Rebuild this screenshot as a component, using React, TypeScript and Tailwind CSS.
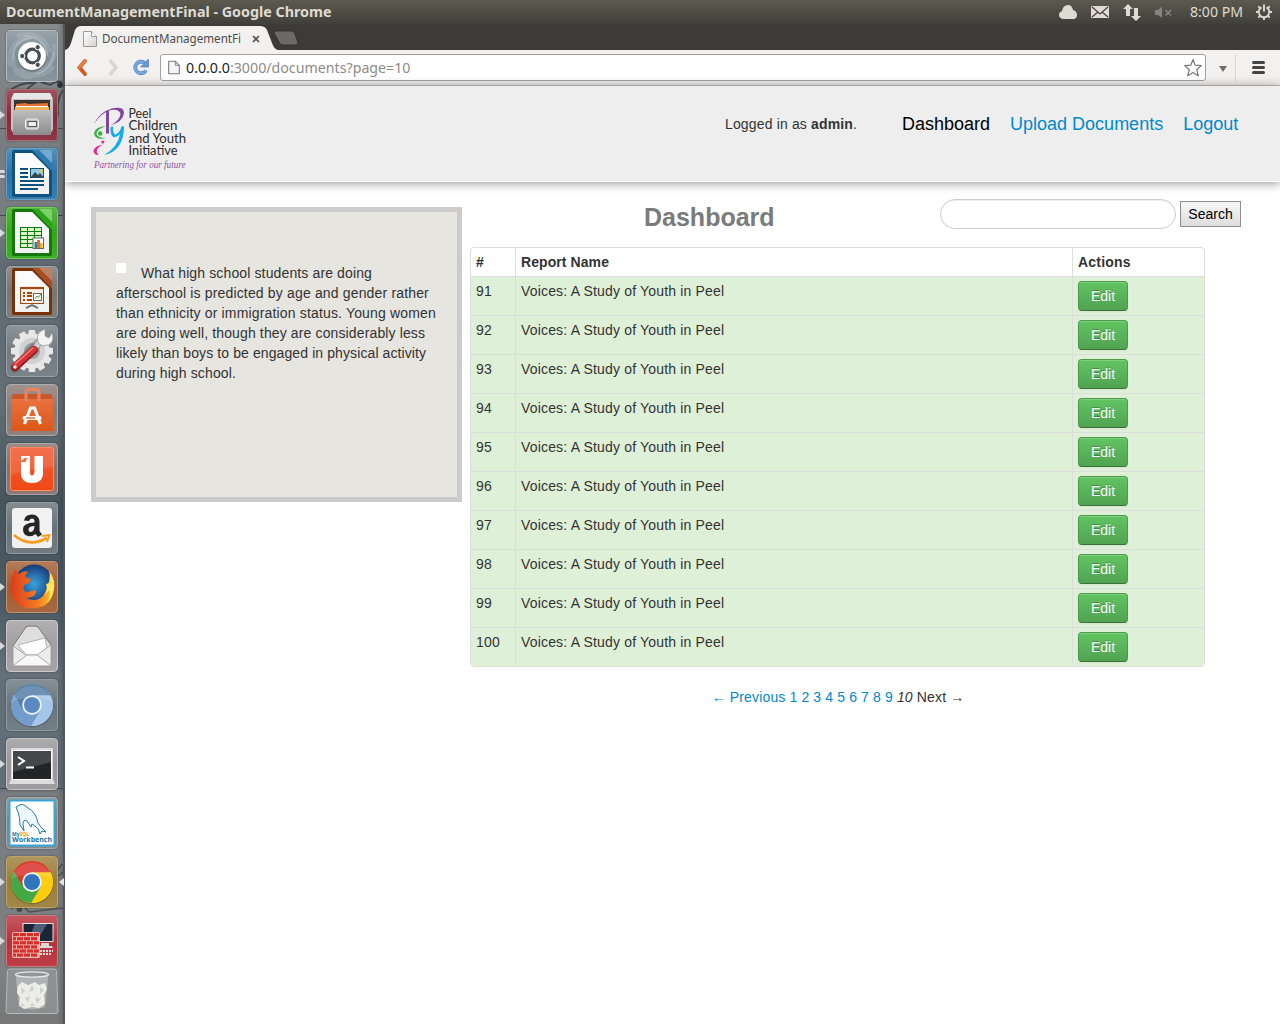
import React from "react";

type LauncherItem = { name: string; tile: string; icon: React.ReactNode; left?: 1 | 2; right?: boolean };

const OfficePage = ({ dark, mid, fold, children }: { dark: string; mid: string; fold: string; children: React.ReactNode }) => (
  <>
    <path d="M8 2H27L46 21V47Q46 49 44 49H8Q6 49 6 47V4Q6 2 8 2Z" fill={dark} />
    <path d="M28 2H44Q46 2 46 4V20Z" fill={fold} opacity=".75" />
    <path d="M26 2H33L46 15V23Z" fill={mid} />
    <path d="M9 5H26L43 22V46H9Z" fill="#f0f1f1" />
    <path d="M9 5H26L43 22V28L9 40Z" fill="#fff" opacity=".7" />
    {children}
  </>
);

const ChromeDisc = ({ top, left, right, core }: { top: string; left: string; right: string; core: string }) => (
  <>
    <circle cx="26" cy="27" r="21.5" fill="#0003" />
    <circle cx="26" cy="26" r="21" fill={right} />
    <path d="M26 26L16.5 31.5L7.8 15.5A21 21 0 0 1 44.6 16.4H26Z" fill={top} />
    <path d="M7.8 15.5L17 31L26 36L35 31L25.2 47A21 21 0 0 1 7.8 15.5Z" fill={left} />
    <path d="M26 16.4H44.6A21 21 0 0 1 25.2 47L35 31Z" fill={right} />
    <circle cx="26" cy="26" r="9.8" fill="#eef2f5" />
    <circle cx="26" cy="26" r="8" fill={core} />
    <path d="M5.5 23A21 21 0 0 1 46.5 23Q26 14 5.5 23Z" fill="#fff" opacity=".14" />
  </>
);

const launcher: LauncherItem[] = [
  {
    name: "Dash",
    tile: "bg-[#7f8d95] border-[#b3bdc3]",
    icon: (
      <>
        <g fill="none" stroke="#dfe6e9" strokeLinecap="round">
          <path d="M4 34Q2 12 24 7M13 6Q34 0 43 20M48 16Q50 34 34 42M46 38Q32 50 14 41M24 47Q6 46 7 26" strokeWidth="5" opacity=".18" />
          <path d="M7 30Q7 10 24 8M18 6Q38 6 42 26M48 22Q46 40 30 44" strokeWidth="1.2" opacity=".4" />
        </g>
        <circle cx="26" cy="27" r="14.5" fill="#0003" />
        <circle cx="26" cy="26" r="14" fill="#fff" />
        <circle cx="26.5" cy="26" r="6.8" fill="none" stroke="#454e52" strokeWidth="3.2" />
        <g fill="#454e52" stroke="#fff" strokeWidth="1"><circle cx="16.2" cy="26" r="2.6" /><circle cx="31.7" cy="17.2" r="2.6" /><circle cx="31.7" cy="34.8" r="2.6" /></g>
      </>
    ),
  },
  {
    name: "Files",
    left: 1,
    tile: "bg-[#87293a] border-[#b06a75]",
    icon: (
      <>
        <path d="M8 4H44L47 11V40L44 46H8L5 40V11Z" fill="#c4c4c4" />
        <path d="M8 4H44L47 10H5Z" fill="#e6e6e6" />
        <path d="M8 11H44V23H8Z" fill="#3a3330" />
        <path d="M10 15L20 14L22 15L42 14V23H9Z" fill="#e3702e" />
        <path d="M9 18H43V23H9Z" fill="#f5b25e" /><path d="M10 17.5H42" stroke="#fff" />
        <path d="M7 21H45V46H7Z" fill="url(#steel)" />
        <rect x="19.5" y="30" width="13" height="10" rx="2" fill="#c2c2c2" stroke="#eee" />
        <rect x="22" y="32.5" width="8.5" height="5" fill="#eee" stroke="#555" />
      </>
    ),
  },
  {
    name: "Writer",
    left: 2,
    tile: "bg-[#2b74a8] border-[#659fc5]",
    icon: (
      <OfficePage dark="#10527f" mid="#2c7bb0" fold="#82b4d5">
        <path d="M14 21H22M14 25H22M14 29H22M14 33H38M14 37H38M14 41H32" stroke="#0b517c" strokeWidth="1.8" />
        <rect x="24.5" y="20.5" width="13" height="9" fill="#8ccbec" stroke="#174d70" />
        <path d="M25 29L29 24L32 27L34 25L37 29Z" fill="#36454a" /><circle cx="35" cy="23" r="1.8" fill="#f3c441" />
      </OfficePage>
    ),
  },
  {
    name: "Calc",
    left: 1,
    tile: "bg-[#35a51e] border-[#6bd154]",
    icon: (
      <OfficePage dark="#127908" mid="#2da31b" fold="#8cdb76">
        <rect x="14" y="20" width="22" height="21" fill="#087c0b" />
        <g fill="#dbf8cb">{[21, 25, 29, 33, 37].map((y) => [15, 22, 29].map((x) => <rect key={`${x}-${y}`} x={x} y={y} width="6" height="3" />))}</g>
        <rect x="27" y="31" width="10.5" height="10.5" fill="#fff" stroke="#666" />
        <path d="M28.5 35H31V41H28.5Z" fill="#357ba8" /><path d="M31 33H34V41H31Z" fill="#e96e22" /><path d="M34 36H36.5V41H34Z" fill="#e7b32d" />
      </OfficePage>
    ),
  },
  {
    name: "Impress",
    tile: "bg-[#78746f] border-[#9fa4a6]",
    icon: (
      <OfficePage dark="#783109" mid="#a84c21" fold="#c98058">
        <rect x="14.5" y="21.5" width="23" height="16" fill="#fff0e5" stroke="#a24817" />
        <path d="M14 22H38" stroke="#a24817" strokeWidth="2.2" />
        <path d="M17 27H19M17 30H19M17 34H19M21 27H26M21 30H26M21 34H26" stroke="#a24817" strokeWidth="2" />
        <rect x="27.5" y="27.5" width="8" height="7" fill="#fff" stroke="#666" /><path d="M29 33L31 30L32.5 31.5L35 28" stroke="#4c9b34" fill="none" />
        <path d="M20 42L26 39L32 42" stroke="#777" strokeWidth="2" fill="none" />
      </OfficePage>
    ),
  },
  {
    name: "System Settings",
    tile: "bg-[#727b82] border-[#9ba2a7]",
    icon: (
      <>
        <g transform="translate(26 26)" fill="#e7e7e7">
          {[0, 30, 60, 90, 120, 150, 180, 210, 240, 270, 300, 330].map((a) => <path key={a} d="M-4 -15L-3 -21H3L4 -15Z" transform={`rotate(${a})`} />)}
          <circle r="17.5" /><circle r="13" fill="#d0d1d1" /><circle r="8" fill="#9b9fa2" />
        </g>
        <path d="M9 43L32 18" stroke="#0003" strokeWidth="9" strokeLinecap="round" />
        <path d="M26 26L36 15" stroke="#cfd2d3" strokeWidth="5" />
        <path d="M33 19Q29 11 35 6L39 4V11L43 13L46 8Q49 17 42 20Q37 22 33 19Z" fill="#f4f4f4" stroke="#999" strokeWidth=".8" />
        <path d="M9 42L28 25" stroke="#941b20" strokeWidth="8" strokeLinecap="round" />
        <path d="M9 41L28 24" stroke="#d33339" strokeWidth="6" strokeLinecap="round" />
        <path d="M9 39L27 23" stroke="#ff8a85" strokeWidth="1.2" /><circle cx="9" cy="42" r="1.7" fill="#eee" />
      </>
    ),
  },
  {
    name: "Ubuntu Software Center",
    tile: "bg-[#8a7974] border-[#a7acae]",
    icon: (
      <>
        <path d="M7 10L5 15V47H47V15L45 10Z" fill="url(#orangeBag)" />
        <path d="M7 10H45L47 15H5Z" fill="#c9572c" />
        <path d="M20 17V8Q20 5.5 23 5.5H30Q33 5.5 33 8V17" fill="none" stroke="#e98461" strokeWidth="3" />
        <path d="M18.5 40L24.5 24H28.5L34.5 40" fill="none" stroke="#fff" strokeWidth="3" />
        <rect x="16.5" y="32" width="19" height="4" rx="2" fill="#fff" /><path d="M20 34H29" stroke="#e1662c" strokeWidth="1.4" />
      </>
    ),
  },
  {
    name: "Ubuntu One",
    tile: "bg-[#8a6e67] border-[#9fa7aa]",
    icon: (
      <>
        <rect x="4.5" y="4.5" width="43" height="43" rx="2" fill="url(#oneOrange)" stroke="#ff9064" />
        <path d="M15 13H24V29Q24 32.500 26 32.500T28.500 29V13H37V30Q37 40 26 40T15 30V19H20V17L22 15L19 15L15 18Z" fill="#fff" />
        <path d="M5 5H47V24Q25 25 5 32Z" fill="#fff" opacity=".12" />
      </>
    ),
  },
  {
    name: "Amazon",
    tile: "bg-[#687279] border-[#939ba0]",
    icon: (
      <>
        <rect x="6" y="6" width="40" height="40" rx="3" fill="#f1f1f1" />
        <path d="M18 18.5Q19 12.5 26 12.5T33.5 20V29L36 32.5L32 35L29.5 32Q26 35 22 34Q17 33 17 27Q17 21 28.5 20.5V19Q28.5 16.5 26 16.5T23 19ZM28.5 24Q22.5 24 22.5 27.5Q22.5 30 25 30Q28.5 29 28.5 24Z" fill="#252525" />
        <path d="M8 33Q23 46 41 36" fill="none" stroke="#f79b19" strokeWidth="2.6" /><path d="M36 34L43.5 33L41 40" fill="none" stroke="#f79b19" strokeWidth="1.8" />
      </>
    ),
  },
  {
    name: "Firefox",
    left: 1,
    tile: "bg-[#a25d33] border-[#c29476]",
    icon: (
      <>
        <circle cx="28" cy="23" r="19.5" fill="url(#foxBlue)" />
        <path d="M44 12Q49 19 48 28Q46 47 26 47.5Q9 47 5 32Q3 20 9 8L13 13Q18 9 22 11Q19 14 19 16L25 18L23 22L18 24Q16 30 21 31L30 29Q31 33 26 36L20 37Q30 42 37 35Q43 26 44 12Z" fill="url(#foxFire)" />
        <path d="M43 10Q51 20 47 32Q45 38 41 41Q45 34 43 29L39 34Q42 27 40 23L44 22Q45 16 43 10Z" fill="#ffe75b" />
      </>
    ),
  },
  {
    name: "Mail",
    left: 1,
    tile: "bg-[#a19da1] border-[#cbc9cb]",
    icon: (
      <>
        <path d="M7 26L20 7Q22 6 26 6Q30 6 32 7L45 25V46H7Z" fill="#dedede" stroke="#777" />
        <path d="M12 25L39 18L41 28L31 36H21Z" fill="#fff" stroke="#999" strokeWidth=".7" />
        <path d="M7 26L20 35H31L45 25V46H7Z" fill="#ededed" stroke="#aaa" />
        <path d="M8 45L21 35H31L44 45" fill="#f7f7f7" stroke="#aaa" />
      </>
    ),
  },
  { name: "Chromium", tile: "bg-[#69767f] border-[#8f9ba2]", icon: <ChromeDisc top="#557fa7" left="#729ccc" right="#a6c6e9" core="#5b8ac2" /> },
  {
    name: "Terminal",
    left: 1,
    tile: "bg-[#999799] border-[#c2c2c2]",
    icon: (
      <>
        <path d="M5 10H47V41L49 46H3L5 41Z" fill="#dcdcdc" />
        <rect x="6.5" y="12.5" width="39" height="29" fill="#222526" stroke="#fafafa" />
        <path d="M7 13H45V24L7 34Z" fill="#fff" opacity=".16" />
        <path d="M12 19L18 23L12 27" fill="none" stroke="#fff" strokeWidth="2" /><path d="M20 29.5H28" stroke="#fff" strokeWidth="2" />
      </>
    ),
  },
  {
    name: "MySQL Workbench",
    tile: "bg-[#808488] border-[#a5a8aa]",
    icon: (
      <>
        <rect x="3.5" y="3.5" width="45" height="45" rx="1" fill="#fff" stroke="#38a5d4" strokeWidth="2" />
        <path d="M12 9Q16 5 22 11Q30 15 32 26Q34 30 40 35L36 34L34 37Q33 31 29 29L26 27L25 30L21 24Q17 22 17 27L18 34L14 28Q14 20 12 15L10 10Z" fill="#edf7fc" stroke="#247aa5" strokeWidth="1" />
        <text x="6" y="38.5" fontFamily="Open Sans, sans-serif" fontSize="5" fontWeight="700" fill="#1872a0">My<tspan fill="#e99421">SQL</tspan></text>
        <text x="6" y="45" fontFamily="Open Sans, sans-serif" fontSize="7.5" fontWeight="700" fill="#1872a0" textLength="40" lengthAdjust="spacingAndGlyphs">Workbench</text>
      </>
    ),
  },
  { name: "Google Chrome", left: 1, right: true, tile: "bg-[#9c7e3a] border-[#bfa365]", icon: <ChromeDisc top="#d9352e" left="#43a846" right="#fccd10" core="#2f76bb" /> },
  {
    name: "Firewall",
    left: 1,
    tile: "bg-[#b8313b] border-[#cf777c]",
    icon: (
      <>
        <rect x="17" y="8.5" width="30" height="18" fill="#1c2536" stroke="#e4e4e4" />
        <path d="M29 9H41L31 26H22Z" fill="#6e86a8" opacity=".6" /><path d="M35 28H43V31H35ZM31 31H46L47 33H31Z" fill="#d8d8d8" />
        <path d="M34 36H47M34 39H46" stroke="#ddd" strokeWidth="2" strokeDasharray="2 1" />
        <rect x="6" y="17" width="28" height="26" rx="2" fill="#f4b5ae" />
        <g fill="#da2d29">{[0, 1, 2, 3, 4, 5].map((r) => [0, 1, 2, 3].map((c) => <rect key={`${r}-${c}`} x={7 + c * 7 + (r % 2 ? -3 : 0) + (r % 2 && c === 0 ? 3 : 0)} y={18 + r * 4.1} width={r % 2 && c === 0 ? 3 : c === 3 && r % 2 === 0 ? 5 : 6} height="3.2" />))}</g>
      </>
    ),
  },
];

function Wallpaper() {
  return (
    <svg viewBox="0 0 65 1000" preserveAspectRatio="none" className="absolute inset-0 h-full w-full" fill="none" stroke="#2c3236">
      <path d="M12 65Q24 58 36 59L28 65M42 58L52 61Q58 56 64 58M65 66Q58 76 60 90Q55 104 45 105" strokeWidth="2" opacity=".7" />
      <circle cx="62" cy="61" r="3" fill="#2c3236" stroke="none" />
      <path d="M0 104.5H65M0 191.5H65M0 764.5H65" opacity=".7" />
      <path d="M64 840Q56 850 52 864M65 848Q58 856 40 858M12 885Q18 875 30 888L65 884" strokeWidth="1.5" opacity=".6" />
      <circle cx="20" cy="885" r="3" fill="#2c3236" stroke="none" opacity=".7" />
    </svg>
  );
}

function Launcher() {
  return (
    <aside className="relative flex w-[65px] shrink-0 flex-col items-start gap-[7px] border-r-2 border-[#50565a] bg-[linear-gradient(to_right,transparent_58px,#0003_65px),linear-gradient(180deg,#878a8c_0%,#777d80_12%,#777d80_20%,#5f6a73_24%,#626d76_38%,#46545c_48%,#4c5a63_58%,#64707a_65%,#606d75_76%,#777c80_77%,#7f8183_94%,#777_100%)] pl-[6px] pt-[6px]">
      <Wallpaper />
      {launcher.map((it) => (
        <div key={it.name} aria-label={it.name} className="relative h-[52px] w-[52px] shrink-0">
          {it.left === 1 && <span className="absolute -left-[6px] top-[22px] h-0 w-0 border-y-[4px] border-l-[5px] border-y-transparent border-l-[#d7d9da]" />}
          {it.left === 2 && (<><span className="absolute -left-[6px] top-[22px] h-[3px] w-[5px] rounded-r bg-[#d7d9da]" /><span className="absolute -left-[6px] top-[27px] h-[3px] w-[5px] rounded-r bg-[#d7d9da]" /></>)}
          {it.right && <span className="absolute -right-[6px] top-[22px] h-0 w-0 border-y-[4px] border-r-[5px] border-y-transparent border-r-[#e4e4e4]" />}
          <div className={`flex h-full w-full rounded-[4px] border shadow-[0_0_2px_#0006] ${it.tile}`}>
            <div className="flex h-full w-full rounded-[3px] bg-[linear-gradient(180deg,#ffffff30,#ffffff00_50%,#ffffff10)]">
              <svg viewBox="0 0 52 52" className="-ml-px -mt-px block h-[52px] w-[52px] shrink-0">{it.icon}</svg>
            </div>
          </div>
        </div>
      ))}
      <svg viewBox="0 0 54 48" className="relative -ml-[1px] -mt-[6px] block h-[48px] w-[54px] shrink-0" aria-label="Trash">
        <path d="M5 1H49Q51 1 51.5 3L53 43Q53 45.5 51 45.5H3Q1 45.5 1 43L2.5 3Q3 1 5 1Z" fill="#a5a8aa" fillOpacity=".45" stroke="#b5b7b8" />
        <path d="M10.5 7L14 39Q27 44 40 39L43.5 7Z" fill="#dfe3e3" opacity=".4" />
        <ellipse cx="27" cy="6.5" rx="16.5" ry="2.6" fill="#8e9698" stroke="#e6e6e6" strokeWidth="1.3" />
        <path d="M12.5 18L17 14L23 17L30 14L34 17L40 15L42 21L39 27L40 36L34 40L27 39L19 41L14 37L15 29L12 25Z" fill="#ecece9" />
        <g fill="#b9bcbb" opacity=".6"><path d="M16 19L20 23L17 26ZM27 17L29 22L24 24ZM35 19L39 22L35 26ZM20 30L25 28L23 34ZM30 29L36 31L32 35ZM17 35L20 38L16 38ZM27 35L30 38L25 38Z" /></g>
      </svg>
    </aside>
  );
}

function PageIcon() {
  return (
    <svg viewBox="0 0 14 16" className="h-4 w-[14px] shrink-0">
      <path d="M.5 .5H8.5L13.5 5.5V15.5H.5Z" fill="url(#paper)" stroke="#9a9a9a" /><path d="M8.5 .5V5.5H13.5" fill="#fff" stroke="#9a9a9a" />
    </svg>
  );
}

function TopBar() {
  return (
    <header className="flex h-6 items-center justify-between bg-[linear-gradient(#5c5a4f,#403f3a)] pl-[6px] pr-[7px] font-['Noto_Sans',sans-serif] text-[#dfdbd2]">
      <svg viewBox="0 0 326 20" className="h-5 w-[326px] overflow-visible"><text x="0" y="14.5" fontSize="14" fontWeight="700" fill="#dfdbd2" textLength="325.5" lengthAdjust="spacingAndGlyphs">DocumentManagementFinal - Google Chrome</text></svg>
      <div className="flex items-center">
        <svg viewBox="0 0 126 24" className="mr-[5px] h-6 w-[126px]">
          <path d="M4 19Q0 18 0 15Q0 12 3 11Q4 5 9 5Q13 5 14 10Q18 11 18 15Q18 18 15 19Z" fill="#dfdbd2" />
          <rect x="32" y="6" width="18" height="12" rx="1" fill="#dfdbd2" /><path d="M33 7L41 14L49 7M33 17L39 12M49 17L43 12" fill="none" stroke="#45443e" strokeWidth="1.3" />
          <path d="M69 4L74 9H71V16H67V9H64ZM77 21L72 16H75V8H79V16H82Z" fill="#dfdbd2" />
          <path d="M96 10H99L103 6.5V18L99 15H96Z" fill="#85837b" /><path d="M106.5 10L112 15.5M112 10L106.5 15.5" stroke="#85837b" strokeWidth="1.5" />
        </svg>
        <svg viewBox="0 0 54 20" className="h-5 w-[54px] overflow-visible"><text x="0" y="15" fontSize="14" fill="#dfdbd2" textLength="53" lengthAdjust="spacingAndGlyphs">8:00 PM</text></svg>
        <svg viewBox="0 0 18 18" className="ml-[11px] h-[18px] w-[18px]" fill="none" stroke="#dfdbd2" strokeWidth="1.9">
          <path d="M6.5 4.3A5.3 5.3 0 1 0 11.5 4.3M9 1.5V8.5" />
          <path d="M1 9H4M14 9H17M3.3 3.3L5.5 5.5M14.7 3.3L12.5 5.5M3.3 14.7L5.5 12.5M14.7 14.7L12.5 12.5M9 14V17" />
        </svg>
      </div>
    </header>
  );
}

function BrowserChrome() {
  return (
    <>
      <div className="relative h-[26px] bg-[#3c3b37]">
        <svg viewBox="0 0 240 26" className="absolute left-0 top-0 h-[26px] w-[240px]">
          <path d="M0 26Q4 25 6 19L10 6Q12 2 16 2H195Q200 2 202 6L207 19Q209 25 213 26Z" fill="#f2f1f0" />
          <path d="M211 7H226Q229 7 230 10L233 19Q233 21 231 21H218Q215 21 214 18L209 9Q209 7 211 7Z" fill="#6b6a66" stroke="#34332f" />
        </svg>
        <div className="relative flex h-full items-center pl-[18px]">
          <span className="pt-[3px]"><PageIcon /></span>
          <svg viewBox="0 0 142 20" className="ml-[5px] mt-[4px] h-5 w-[142px] overflow-visible"><text x="0" y="14" fontFamily="Noto Sans, sans-serif" fontSize="12.5" fill="#4c4c4c" textLength="139" lengthAdjust="spacingAndGlyphs">DocumentManagementFi</text></svg>
          <svg viewBox="0 0 8 8" className="ml-[8px] mt-[4px] h-2 w-2" stroke="#4d4d4d" strokeWidth="1.6"><path d="M1 1L7 7M7 1L1 7" /></svg>
        </div>
      </div>
      <div className="flex h-9 items-center border-b border-[#c8c6c4] bg-[#f2f1f0]">
        <svg viewBox="0 0 95 36" className="h-9 w-[95px] shrink-0" fill="none">
          <path d="M20 11L14.5 17.5L20 24" stroke="#d3571f" strokeWidth="3.8" strokeLinecap="round" /><path d="M20 11L14.5 17.5" stroke="#ef8044" strokeWidth="2.2" strokeLinecap="round" />
          <path d="M45.5 11L51 17.5L45.5 24" stroke="#d6d5d4" strokeWidth="3.4" strokeLinecap="round" />
          <path d="M80 13.3A5.8 5.8 0 1 0 81 20.5" stroke="#5485bd" strokeWidth="3.8" /><path d="M80 13.3A5.8 5.8 0 1 0 81 20.5" stroke="#78a8dd" strokeWidth="2.4" /><path d="M83.5 9V17H75.5Z" fill="#679bd4" stroke="#4d80b7" strokeWidth=".7" />
        </svg>
        <div className="flex h-[27px] w-[1046px] items-center rounded-[3px] border border-[#a5a09c] bg-white pl-[7px]">
          <svg viewBox="0 0 14 16" className="h-[15px] w-[12px]"><path d="M.8 .8H8.5L13.2 5.5V15.2H.8Z" fill="#f5f5f5" stroke="#777" strokeWidth="1.2" /><path d="M8.5 .5V5.5H13.5" fill="none" stroke="#777" /></svg>
          <svg viewBox="0 0 230 20" className="ml-[6px] h-5 w-[230px] overflow-visible"><text x="0" y="15" fontFamily="Noto Sans, sans-serif" fontSize="14" fill="#8d8b88" textLength="224.5" lengthAdjust="spacingAndGlyphs"><tspan fill="#222">0.0.0.0</tspan>:3000/documents?page=10</text></svg>
          <svg viewBox="0 0 20 20" className="ml-auto mr-[2px] h-5 w-5"><path d="M10 1.5L12.2 7.2L18.3 7.6L13.8 11.8L15.3 17.7L10 14.6L4.7 17.7L6.2 11.8L1.7 7.6L7.8 7.2Z" fill="#fff" stroke="#777" strokeWidth="1.2" strokeLinejoin="round" /></svg>
        </div>
        <span className="ml-[13px] mt-[2px] h-0 w-0 border-x-[4px] border-t-[6px] border-x-transparent border-t-[#6d6d6d]" />
        <span className="ml-[8px] h-7 w-px bg-[#dad8d6]" />
        <span className="ml-4 flex w-[13px] flex-col gap-[2px]"><i className="h-[3px] rounded-sm bg-[#444]" /><i className="h-[3px] rounded-sm bg-[#444]" /><i className="h-[3px] rounded-sm bg-[#444]" /></span>
      </div>
    </>
  );
}

function PeelLogo() {
  return (
    <svg viewBox="0 0 94 64" className="h-16 w-[94px] overflow-visible" aria-label="Peel Children and Youth Initiative">
      <path d="M1 17Q7 5 18 1.8Q31 -1.500 31 6Q30 15 17 18.5Q27 13.5 27.5 7Q26 1.5 17 3.2Q8 6 1 17Z" fill="#8147a0" />
      <path d="M13 4.5L16 3.5V26.5H13Z" fill="#8147a0" />
      <path d="M13 19Q2 20 1 26Q2 34 13 31Q5 31 3.5 27Q4 22 13 19Z" fill="#3fae49" />
      <circle cx="7.2" cy="26.5" r="2.3" fill="#3fae49" />
      <path d="M17.5 20L20 19.5Q20 27 22 27.5Q27 26 28.5 19.5L31 19Q31 44 11 48Q25 40 27 27Q24 31 20.5 30Q17 28 17.5 20Z" fill="#11aeea" />
      <path d="M10 37.5Q1 39 .5 44Q1 48.5 6 48Q3 46 4 43Q5 40 10 37.5Z" fill="#e62a91" />
      <circle cx="9.8" cy="35" r="1.6" fill="#e62a91" />
      <g fontFamily="Lato, sans-serif" fontSize="12.5" fill="#2c2c2c">
        <text x="35.5" y="10.8" textLength="23" lengthAdjust="spacingAndGlyphs">Peel</text>
        <text x="35.5" y="23.3" textLength="49" lengthAdjust="spacingAndGlyphs">Children</text>
        <text x="35.5" y="35.7" textLength="57.5" lengthAdjust="spacingAndGlyphs">and Youth</text>
        <text x="35.5" y="48" textLength="49" lengthAdjust="spacingAndGlyphs">Initiative</text>
      </g>
      <text x="1" y="60.5" fontFamily="Liberation Serif, serif" fontStyle="italic" fontSize="11" fill="#8d54a5" textLength="91.5" lengthAdjust="spacingAndGlyphs">Partnering for our future</text>
    </svg>
  );
}

export default function App() {
  const rows = [91, 92, 93, 94, 95, 96, 97, 98, 99, 100];
  const pages = [1, 2, 3, 4, 5, 6, 7, 8, 9];
  return (
    <div className="flex h-[1024px] w-[1280px] flex-col overflow-hidden bg-white font-['Liberation_Sans',sans-serif] text-[14px] leading-5 text-[#333]">
      <svg className="absolute h-0 w-0" aria-hidden="true"><defs>
        <linearGradient id="steel" x2="0" y2="1"><stop stopColor="#bebebe" /><stop offset="1" stopColor="#8c8c8c" /></linearGradient>
        <linearGradient id="paper" x2="1" y2="1"><stop stopColor="#fff" /><stop offset="1" stopColor="#d4d4d4" /></linearGradient>
        <linearGradient id="orangeBag" x2="0" y2="1"><stop stopColor="#eb7647" /><stop offset="1" stopColor="#dc5717" /></linearGradient>
        <linearGradient id="oneOrange" x2="0" y2="1"><stop stopColor="#f25b36" /><stop offset="1" stopColor="#ef4816" /></linearGradient>
        <radialGradient id="foxBlue"><stop stopColor="#38a4dc" /><stop offset="1" stopColor="#183b78" /></radialGradient>
        <linearGradient id="foxFire" x2="1" y2="0"><stop stopColor="#dc3d1b" /><stop offset=".6" stopColor="#f07822" /><stop offset="1" stopColor="#ffc72d" /></linearGradient>
      </defs></svg>
      <TopBar />
      <div className="flex h-[1000px]">
        <Launcher />
        <main className="flex w-[1215px] flex-col overflow-hidden">
          <BrowserChrome />
          <div className="flex h-24 shrink-0 items-start border-b border-white bg-[#eee] pl-[28px] shadow-[0_1px_10px_rgba(0,0,0,0.45)]">
            <div className="mt-[21px]"><PeelLogo /></div>
            <p className="ml-[538px] mt-[28px] w-[132px] whitespace-nowrap tracking-[0.15px]">Logged in as <b>admin</b>.</p>
            <nav className="ml-[45px] mt-[28px] flex gap-5 whitespace-nowrap text-[18px]">
              <a className="text-black">Dashboard</a><a className="text-[#0088cc]">Upload Documents</a><a className="text-[#0088cc]">Logout</a>
            </nav>
          </div>
          <div className="flex items-start pl-[26px]">
            <section className="mt-[25px] h-[295px] w-[371px] border-[5px] border-[#ccc] bg-[#e6e5e0] pl-5 pr-4 pt-[51px]">
              <p className="whitespace-nowrap tracking-[0.13px]">
                <span className="mr-[15px] inline-block h-[10px] w-[10px] bg-white align-[5px]" />What high school students are doing<br />
                <span className="tracking-[0.16px]">afterschool is predicted by age and gender rather</span><br />
                <span className="tracking-[0.16px]">than ethnicity or immigration status. Young women</span><br />
                are doing well, though they are considerably less<br />
                <span className="tracking-[0.1px]">likely than boys to be engaged in physical activity</span><br />
                during high school.
              </p>
            </section>
            <section className="ml-2 w-[771px]">
              <div className="flex h-[65px] items-start">
                <h1 className="ml-[174px] mt-[15px] w-[296px] text-[25px] font-bold leading-10 text-[#7b7b7b]">Dashboard</h1>
                <input aria-label="Search documents" className="mt-[17px] h-[30px] w-[236px] rounded-[15px] border border-[#ccc] px-[14px] shadow-[inset_0_1px_1px_rgba(0,0,0,0.075)]" />
                <button className="ml-1 mt-[19px] h-[26px] w-[61px] border border-[#8e8e8e] bg-linear-to-b from-[#f6f6f6] to-[#dedede] text-black">Search</button>
              </div>
              <table className="w-[735px] table-fixed border-separate border-spacing-0 rounded-[4px] border border-[#ddd] text-left">
                <colgroup><col className="w-[44px]" /><col className="w-[557px]" /><col className="w-[132px]" /></colgroup>
                <thead className="tracking-[0.15px]"><tr><th className="px-[5px] py-1">#</th><th className="border-l border-[#ddd] px-[5px] py-1 tracking-[0.08px]">Report Name</th><th className="border-l border-[#ddd] px-[5px] py-1 tracking-[0.2px]">Actions</th></tr></thead>
                <tbody>
                  {rows.map((n) => (
                    <tr key={n} className="group h-[39px] align-top">
                      <td className="border-t border-[#ddd] bg-[#dff0d8] px-[5px] py-1 tracking-[0.2px] group-last:rounded-bl-[4px]">{n}</td>
                      <td className="border-l border-t border-[#ddd] bg-[#dff0d8] px-[5px] py-1 tracking-[0.175px]">Voices: A Study of Youth in Peel</td>
                      <td className="border-l border-t border-[#ddd] bg-[#dff0d8] px-[5px] py-1 group-last:rounded-br-[4px]">
                        <button className="block h-[30px] w-[50px] rounded-[4px] border border-[#4a9a4a] border-b-[#387038] bg-linear-to-b from-[#62c462] to-[#51a351] text-white shadow-[inset_0_1px_0_rgba(255,255,255,0.2),0_1px_2px_rgba(0,0,0,0.05)] [text-shadow:0_-1px_0_rgba(0,0,0,0.25)]">Edit</button>
                      </td>
                    </tr>
                  ))}
                </tbody>
              </table>
              <div className="mt-5 flex w-[736px] justify-center gap-1 whitespace-nowrap tracking-[0.15px]">
                <a className="text-[#0088cc]">← Previous</a>
                {pages.map((p) => <a key={p} className="text-[#0088cc]">{p}</a>)}
                <em>10</em><span>Next →</span>
              </div>
            </section>
          </div>
        </main>
      </div>
    </div>
  );
}
